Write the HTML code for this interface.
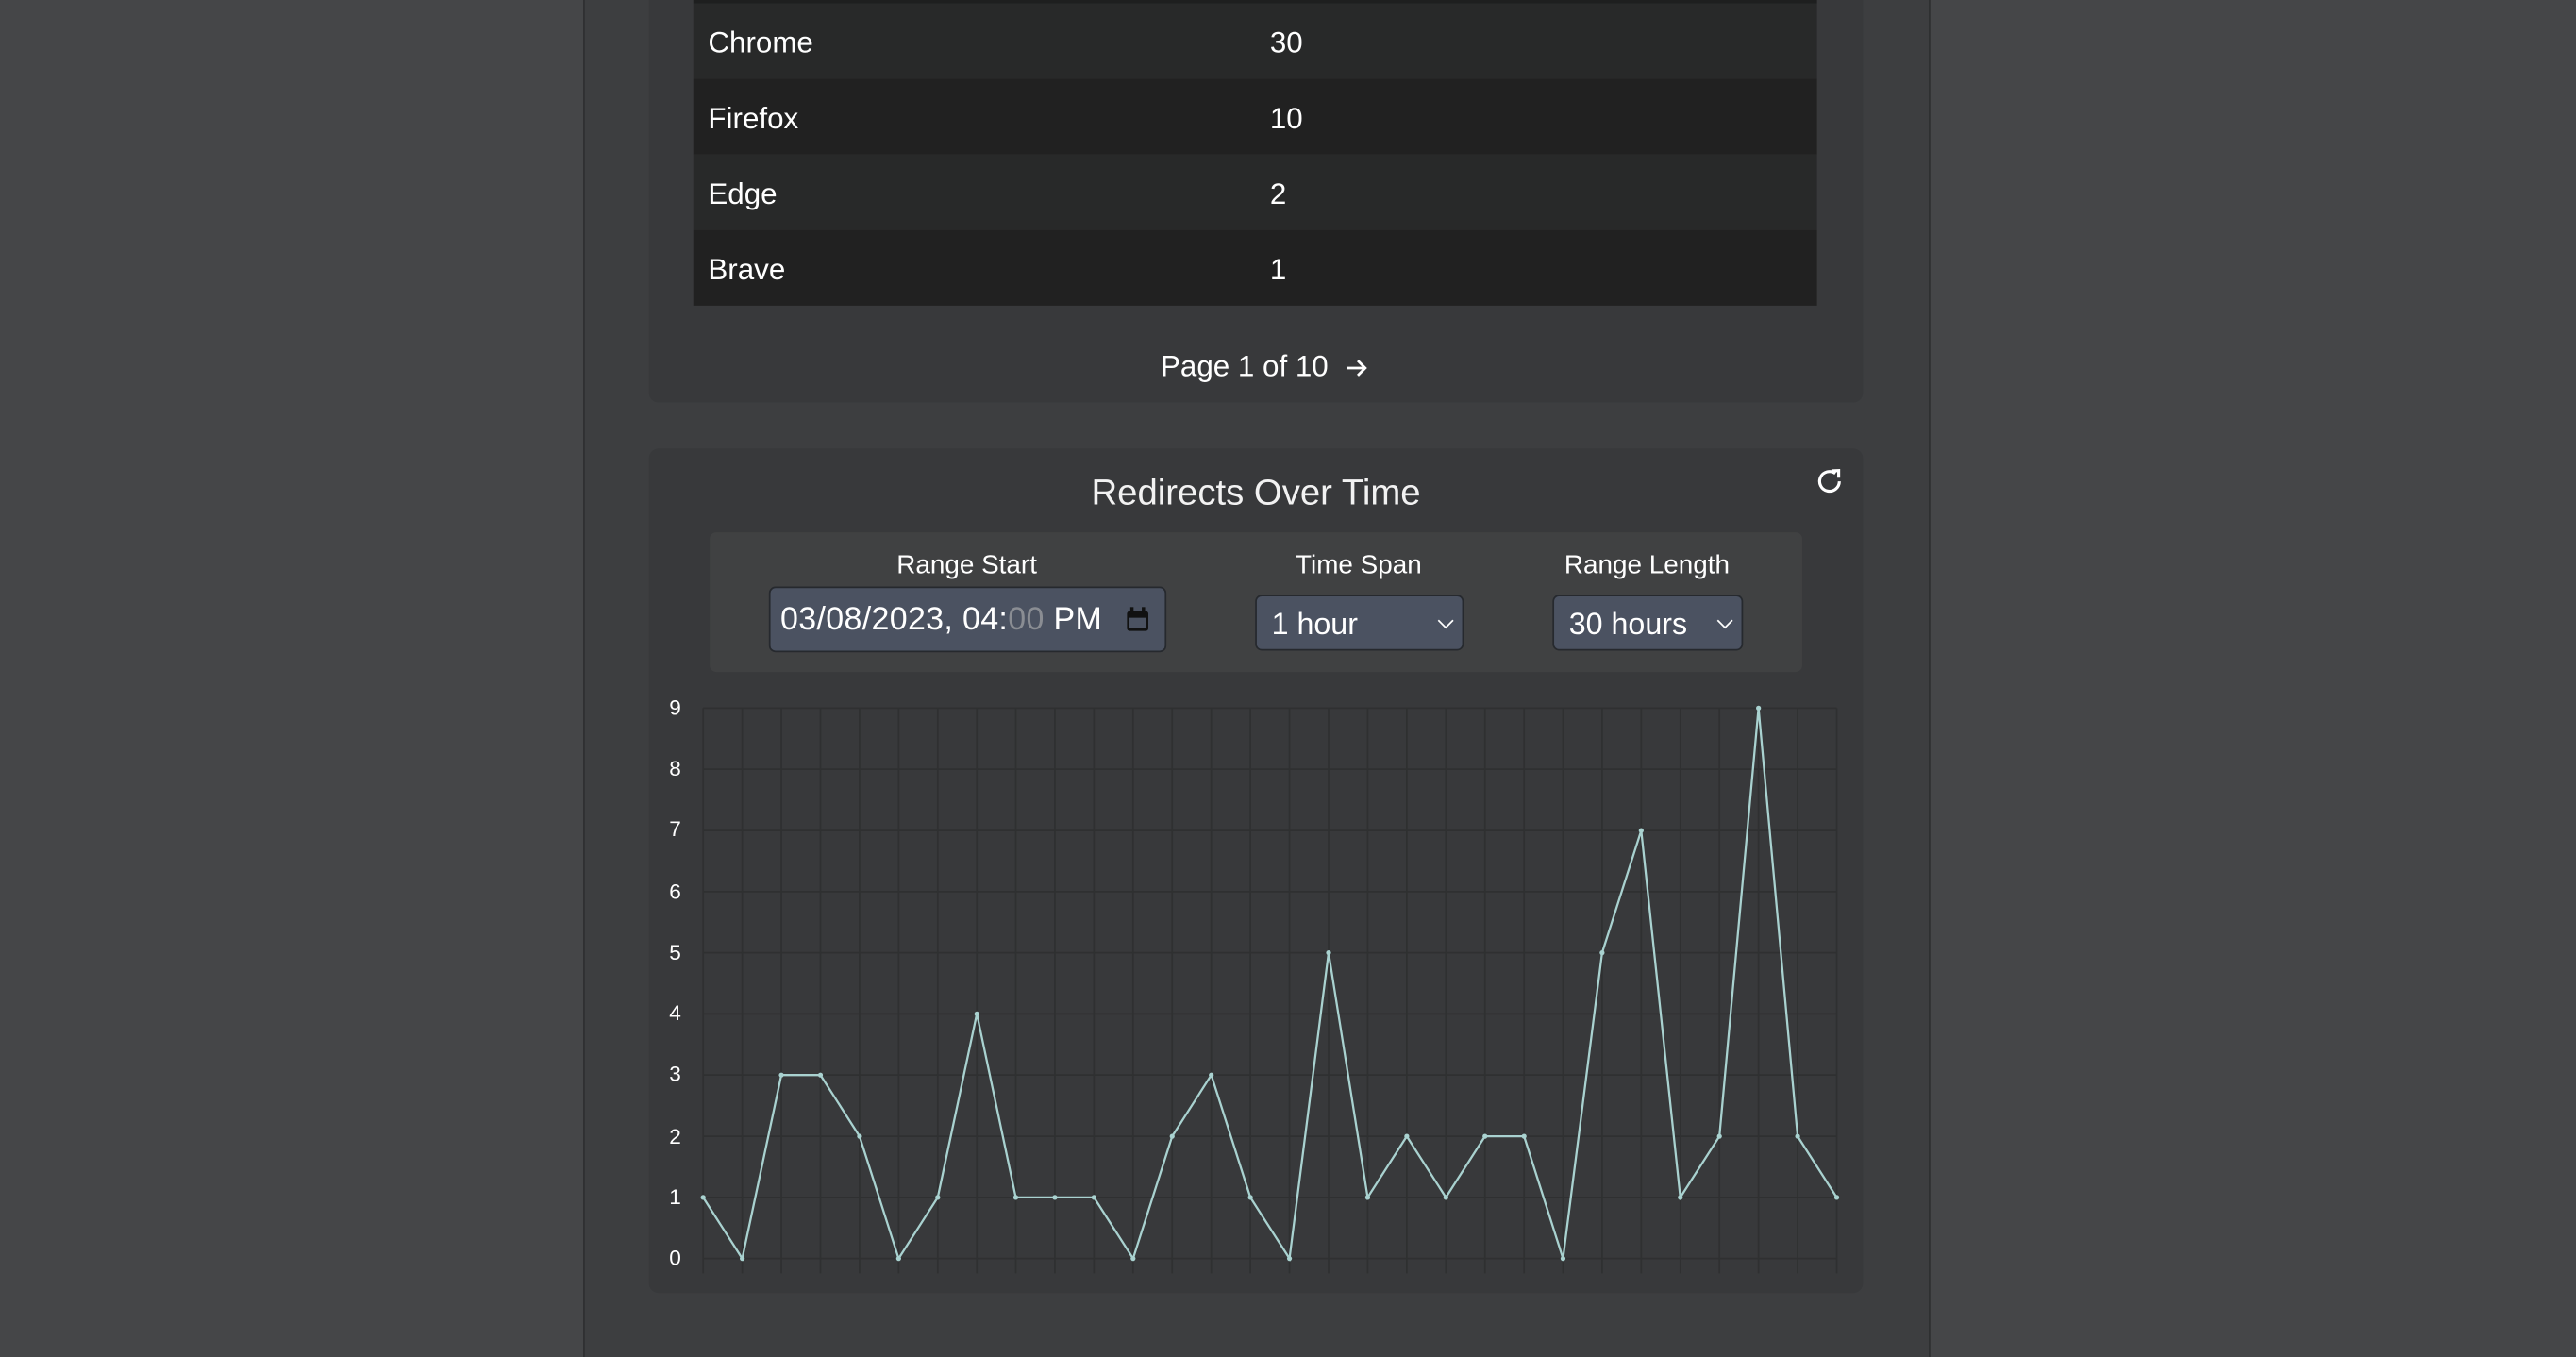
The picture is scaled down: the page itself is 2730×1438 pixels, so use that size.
<!DOCTYPE html>
<html><head><meta charset="utf-8"><style>
html,body{margin:0;padding:0;background:#454648;overflow:hidden;width:2730px;height:1438px}
#w{position:absolute;left:0;top:0;width:1568px;height:826px;transform:scale(1.74107);transform-origin:0 0;font-family:"Liberation Sans",sans-serif;color:#fff}
.a{position:absolute}
.col{left:355px;top:0;width:818px;height:826px;background:#3d3e40;border-left:1.5px solid #2f3031;border-right:1.5px solid #2f3031}
.card{background:#38393b;border-radius:6px}
.row{left:422px;width:684px;height:46px;font-size:18px;line-height:48px}
.row span{position:absolute;left:9px}
.row b{font-weight:normal;position:absolute;left:351px}
.lbl{font-size:16px;text-align:center}
.inp{background:#4b5261;border:1.5px solid #26292e;border-radius:4px;box-sizing:border-box;font-size:18px}
</style></head><body><div id="w">
<div class="a col"></div>
<div class="a card" style="left:395px;top:-10px;width:739px;height:255px"></div>
<div class="a" style="left:422px;top:0;width:684px;height:2px;background:#1e1f1f"></div>
<div class="a row" style="top:2px;background:#282929"><span>Chrome</span><b>30</b></div>
<div class="a row" style="top:48px;background:#212121"><span>Firefox</span><b>10</b></div>
<div class="a row" style="top:94px;background:#282929"><span>Edge</span><b>2</b></div>
<div class="a row" style="top:140px;background:#212121"><span>Brave</span><b>1</b></div>
<div class="a" style="left:395px;width:739px;top:213px;text-align:center;font-size:18px;padding-left:10px;box-sizing:border-box">Page 1 of 10 &nbsp;<svg width="14" height="12" viewBox="0 0 14 12" style="vertical-align:-1px"><path d="M1 6H12M7.5 1.5L12 6L7.5 10.5" fill="none" stroke="#fff" stroke-width="1.6"/></svg></div>

<div class="a card" style="left:395px;top:273px;width:739px;height:514px"></div>
<div class="a" style="left:395px;width:739px;top:287px;text-align:center;font-size:22px;color:#f2f2f2">Redirects Over Time</div>
<svg class="a" style="left:1104px;top:283px" width="20" height="20" viewBox="0 0 20 20"><path d="M15.6 10 A6 6 0 1 1 13.2 5.2" fill="none" stroke="#fff" stroke-width="1.8"/><path d="M10.8 3.6 L15.2 3.4 L15.2 7.8" fill="none" stroke="#fff" stroke-width="1.8"/></svg>
<div class="a" style="left:432px;top:324px;width:665px;height:85px;background:#404142;border-radius:4px"></div>
<div class="a lbl" style="left:468px;width:241px;top:336px">Range Start</div>
<div class="a lbl" style="left:764px;width:126px;top:336px">Time Span</div>
<div class="a lbl" style="left:945px;width:115px;top:336px">Range Length</div>
<div class="a inp" style="left:468px;top:357px;width:242px;height:40px;line-height:39px;padding-left:6px;font-size:19.5px;letter-spacing:0.2px">03/08/2023, 04:<span style="color:#8a8d93">00</span> PM
<svg style="position:absolute;left:216px;top:11px" width="15" height="16" viewBox="0 0 15 16"><rect x="1" y="3" width="13" height="12" rx="1.5" fill="#111"/><rect x="3" y="0.5" width="2" height="4" fill="#111"/><rect x="10" y="0.5" width="2" height="4" fill="#111"/><rect x="2.5" y="7" width="10" height="6.5" fill="#4b5261"/></svg></div>
<div class="a inp" style="left:764px;top:362px;width:127px;height:34px;line-height:34px;padding-left:9px;font-size:18.5px">1 hour<svg style="position:absolute;right:4px;top:13px" width="12" height="8"><path d="M1.5 1.5L6 6L10.5 1.5" fill="none" stroke="#fff" stroke-width="1"/></svg></div>
<div class="a inp" style="left:945px;top:362px;width:116px;height:34px;line-height:34px;padding-left:9px;font-size:18.5px">30 hours<svg style="position:absolute;right:4px;top:13px" width="12" height="8"><path d="M1.5 1.5L6 6L10.5 1.5" fill="none" stroke="#fff" stroke-width="1"/></svg></div>

<svg class="a" style="left:0;top:0" width="1568" height="826">
<g stroke="#2f3031" stroke-width="1">
<path d="M428 431H1118M428 468.2H1118M428 505.5H1118M428 542.7H1118M428 579.9H1118M428 617.1H1118M428 654.3H1118M428 691.6H1118M428 728.8H1118M428 766H1118"/>
<path d="M428 431V775M451.8 431V775M475.6 431V775M499.4 431V775M523.2 431V775M547 431V775M570.8 431V775M594.6 431V775M618.3 431V775M642.1 431V775M665.9 431V775M689.7 431V775M713.5 431V775M737.3 431V775M761.1 431V775M784.9 431V775M808.7 431V775M832.5 431V775M856.3 431V775M880.1 431V775M903.9 431V775M927.7 431V775M951.4 431V775M975.2 431V775M999 431V775M1022.8 431V775M1046.6 431V775M1070.4 431V775M1094.2 431V775M1118 431V775"/>
</g>
<g fill="#fff" font-size="13" font-family="Liberation Sans,sans-serif" text-anchor="middle">
<text x="411" y="435">9</text><text x="411" y="472">8</text><text x="411" y="509">7</text><text x="411" y="547">6</text><text x="411" y="584">5</text><text x="411" y="621">4</text><text x="411" y="658">3</text><text x="411" y="696">2</text><text x="411" y="733">1</text><text x="411" y="770">0</text>
</g>
<polyline fill="none" stroke="#a9d2d0" stroke-width="1.3" points="428,728.8 451.8,766 475.6,654.3 499.4,654.3 523.2,691.6 547,766 570.8,728.8 594.6,617.1 618.3,728.8 642.1,728.8 665.9,728.8 689.7,766 713.5,691.6 737.3,654.3 761.1,728.8 784.9,766 808.7,579.9 832.5,728.8 856.3,691.6 880.1,728.8 903.9,691.6 927.7,691.6 951.4,766 975.2,579.9 999,505.5 1022.8,728.8 1046.6,691.6 1070.4,431 1094.2,691.6 1118,728.8"/>
<g fill="#a9d2d0">
<circle cx="428" cy="728.8" r="1.5"/><circle cx="451.8" cy="766" r="1.5"/><circle cx="475.6" cy="654.3" r="1.5"/><circle cx="499.4" cy="654.3" r="1.5"/><circle cx="523.2" cy="691.6" r="1.5"/><circle cx="547" cy="766" r="1.5"/><circle cx="570.8" cy="728.8" r="1.5"/><circle cx="594.6" cy="617.1" r="1.5"/><circle cx="618.3" cy="728.8" r="1.5"/><circle cx="642.1" cy="728.8" r="1.5"/><circle cx="665.9" cy="728.8" r="1.5"/><circle cx="689.7" cy="766" r="1.5"/><circle cx="713.5" cy="691.6" r="1.5"/><circle cx="737.3" cy="654.3" r="1.5"/><circle cx="761.1" cy="728.8" r="1.5"/><circle cx="784.9" cy="766" r="1.5"/><circle cx="808.7" cy="579.9" r="1.5"/><circle cx="832.5" cy="728.8" r="1.5"/><circle cx="856.3" cy="691.6" r="1.5"/><circle cx="880.1" cy="728.8" r="1.5"/><circle cx="903.9" cy="691.6" r="1.5"/><circle cx="927.7" cy="691.6" r="1.5"/><circle cx="951.4" cy="766" r="1.5"/><circle cx="975.2" cy="579.9" r="1.5"/><circle cx="999" cy="505.5" r="1.5"/><circle cx="1022.8" cy="728.8" r="1.5"/><circle cx="1046.6" cy="691.6" r="1.5"/><circle cx="1070.4" cy="431" r="1.5"/><circle cx="1094.2" cy="691.6" r="1.5"/><circle cx="1118" cy="728.8" r="1.5"/>
</g>
</svg>
</div></body></html>
